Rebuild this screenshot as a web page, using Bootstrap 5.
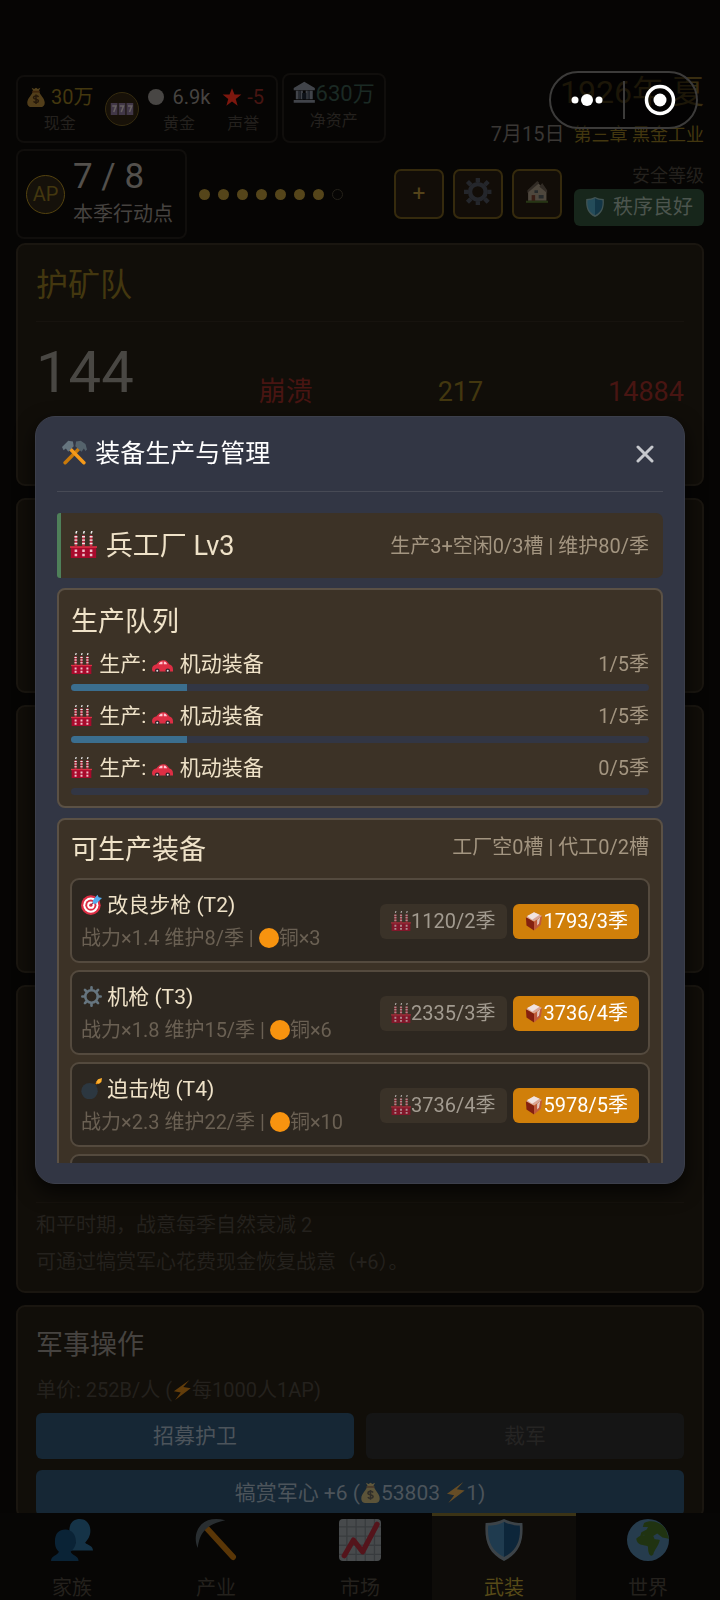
<!DOCTYPE html>
<html lang="zh-CN">
<head>
<meta charset="utf-8">
<meta name="viewport" content="width=device-width, initial-scale=1">
<title>装备生产与管理</title>
<link href="https://cdn.jsdelivr.net/npm/bootstrap@5.3.0/dist/css/bootstrap.min.css" rel="stylesheet">
<style>
body{background:#060504;color:#464340;font-family:Roboto,"Noto Sans CJK SC",sans-serif;font-size:20px;line-height:30px;height:100vh;overflow:hidden}
button{font-family:inherit}
.ico{width:1em;height:1em;flex:none;vertical-align:-3px}
.lead-ico{margin-right:2px}
.dim{opacity:.36}
.page{min-height:0;overflow:hidden;padding:73px 16px 0}
.gold{color:#43370f}.faint{color:#24211d}.danger-dim{color:#481512}.green-dim{color:#1b2a24}
.stat-box{border:2px solid #100e0c;border-radius:8px}
.stat-box small{font-size:16px;line-height:24px;color:#24211e}
.funds{height:68px;margin-top:2px}
.assets{font-size:22px;padding:4px 9px 8px}
.slot-btn{width:34px;height:34px;border:1px solid #352b0f;background:#171108;font-size:24px}
.year{font-size:32px;line-height:38px;color:#382d10}
.date{color:#3a3734}
.chapter{font-size:18px;line-height:26px}
.ap-box{min-width:171px}
.ap-ring{width:39px;height:39px;border:1px solid #54430f;background:#15110a;line-height:37px}
.ap-num{font-size:35px;line-height:44px;color:#53504c}
.dot{width:11px;height:11px;background:#55451a}
.dot-empty{background:none;border:1px solid #242119}
.tools{gap:9px}
.tool{width:50px;height:50px;border:2px solid #352a0d;border-radius:7px;background:#120d08;color:#54431a}
.safe{background:#17261b;border-radius:6px;height:37px;padding:0 11px;color:#4c554e}
.panel{background:#110e09;border:2px solid #1a1610;border-radius:9px;padding:0 18px;margin-bottom:12px;flex:none}
.panel-title{font-size:32px;line-height:44px;padding:18px 0 14px;border-bottom:1px solid #17130e}
.count{font-size:58px;line-height:60px;color:#494743}
.kpi{font-size:27px;line-height:36px}
.h-a{min-height:243px}.h-b{min-height:195px}.h-c{min-height:268px}.h-d{min-height:308px;padding-bottom:6px}
.note{line-height:37px;padding-top:4px;border-top:1px solid #16120d}
.h27{font-size:27px;line-height:36px;font-weight:400;margin:0}
.act{height:46px;border:0;border-radius:6px;background:#162735;color:#4c545b;font-size:21px}
.act-off{background:#151515;color:#252423}
.act-wide{margin-top:11px}
.tabs{height:87px;flex:none;background:#070605}
.tabs a{flex:1;color:#24211d;text-decoration:none;border-top:3px solid transparent;padding-top:3px}
.tabs a.on{background:#0e0c09;border-color:#3b3315;color:#574a18}
.tabs svg{font-size:42px}
.tabs span{margin-top:15px;line-height:24px}
.capsule{top:71px;right:22px;width:149px;height:58px;border:2px solid #3c3b3a;border-radius:29px;background:rgba(0,0,0,.5);z-index:30}
.capsule button{border:0;background:none;padding:0;line-height:0}
.capsule i{width:2px;height:38px;background:#3c3b3a}
.veil{z-index:20;padding:0 35px}
.sheet{background:#323644;border:1px solid #3c3f4b;border-radius:20px;height:48vh;padding:0 21px 20px;box-shadow:0 8px 20px rgba(0,0,0,.7)}
.sheet-head{height:75px;border-bottom:1px solid #474a55;font-size:25px;color:#fff;flex:none;padding:0 9px 0 5px}
.sheet-head h1{font-size:25px;line-height:36px;font-weight:400;margin:0}
.sheet-head button{border:0;background:none;padding:0;line-height:0}
.sheet-body{min-height:0;overflow:hidden;padding-top:21px;color:#efe2c8}
.arsenal{background:#3c3226;border-left:4px solid #4f8059;border-radius:3px 7px 7px 3px;height:65px;padding:0 14px 0 9px;flex:none}
.sub{color:#a39580}
.box{background:#3c3226;border:2px solid #5b5145;border-radius:8px;padding:0 12px 2px;margin-top:10px;flex:none}
.queue-title{padding:14px 0 8px}
.makeable{padding-top:8px;margin-bottom:10px}
.job{font-size:21px;line-height:32px}
.job .sub{font-size:20px}
.meter{height:7px;border-radius:4px;background:#323644;margin:4px 0 9px}
.meter .progress-bar{background:#3b6e8e}
.gear-row{background:#2d2720;border:2px solid #544a3e;border-radius:9px;height:85px;padding:2px 9px 0;margin:0 -1px 7px}
.gear-name{font-size:21px;line-height:32px}
.gear-info{color:#6a6053;line-height:34px}
.make{height:35px;border:0;border-radius:6px;padding:0 11px;background:#3a3228;color:#a29b90;font-size:20px;line-height:35px;white-space:nowrap}
.make .ico{opacity:.65}
.buy{background:#d07f0a;color:#fff}
.buy .ico{opacity:1}
.makes{gap:6px}
</style>
</head>
<body class="d-flex flex-column">
<svg class="d-none" aria-hidden="true">
 <symbol id="bag" viewBox="0 0 32 32"><path fill="#d9a441" d="M11 7h10c1 5 9 11 9 18 0 5-3 7-7 7H9c-4 0-7-2-7-7C2 18 10 12 11 7z"/><path fill="#e2b04a" d="M9 1l4 2 3-2 3 2 4-2-3 6h-8z"/><path fill="#a6601c" d="M10 6h12v3H10z"/><path fill="none" stroke="#5e3b16" stroke-width="2.4" d="M20 16c-2-3-8-2-8 1s8 2 8 5-6 4-8 1M16 12v15"/></symbol>
 <symbol id="slots" viewBox="0 0 32 24"><g fill="#8b7bb8"><rect x="1" y="4" width="9" height="16"/><rect x="11.500" y="4" width="9" height="16"/><rect x="22" y="4" width="9" height="16"/></g><g fill="none" stroke="#f4eefa" stroke-width="2"><path d="M3 8h5l-3 8M13 8h5l-3 8M24 8h5l-3 8"/></g></symbol>
 <symbol id="star" viewBox="0 0 32 32"><path fill="#7c170e" d="M16 2l4 10h11l-9 7 3 11-9-7-9 7 3-11-9-7h11z"/></symbol>
 <symbol id="bank" viewBox="0 0 32 32"><path fill="#a9b4c6" d="M16 1L1 10v3h30v-3zM4 14h4v12H4zM11 14h3v12h-3zM18 14h3v12h-3zM24 14h4v12h-4zM1 27h30v4H1z"/><path fill="#5d6b80" d="M8 14h3v12H8zM21 14h3v12h-3z"/><path fill="#1d2b3c" d="M13 17h6v9h-6z"/></symbol>
 <symbol id="gear" viewBox="0 0 32 32"><g stroke="#66757f" fill="none"><circle cx="16" cy="16" r="9.500" stroke-width="4"/><path stroke-width="4" stroke-linecap="round" d="M16 5V2M16 30v-3M5 16H2M30 16h-3M8 8L6 6M26 26l-2-2M8 24l-2 2M26 6l-2 2"/></g></symbol>
 <symbol id="cog" viewBox="0 0 32 32"><g stroke="#46546b" fill="none"><circle cx="16" cy="16" r="9" stroke-width="5"/><path stroke-width="5" d="M16 5V0M16 32v-5M5 16H0M32 16h-5M8 8L4 4M28 28l-4-4M8 24l-4 4M28 4l-4 4"/></g></symbol>
 <symbol id="house" viewBox="0 0 32 32"><path fill="#b9ad9c" d="M3 14L16 2l13 12v14H3z"/><path fill="#6a6258" d="M16 0l3 3-17 14v-4zM19 8l4-5 7 10v4z"/><path fill="#7c3b2c" d="M8 20h5v9H8z"/><path fill="#4b5d6b" d="M18 20h7v5h-7zM12 13h5v4h-5z"/><path fill="#4d7d2c" d="M0 28h32v3H0z"/></symbol>
 <symbol id="shield" viewBox="0 0 32 32"><path fill="#8fa6b8" d="M16 0c4 2 9 3 14 3 1 14-2 23-14 29C4 26 1 17 2 3c5 0 10-1 14-3z"/><path fill="#3d8fca" d="M16 2v27C6 24 3 16 4 5c4 0 9-1 12-3z"/><path fill="#0d5492" d="M16 2v27c10-5 13-13 12-24-4 0-9-1-12-3z"/></symbol>
 <symbol id="hammers" viewBox="0 0 32 32"><g stroke-linecap="round" stroke-width="4.500" fill="none"><path stroke="#c97a0b" d="M22 11L4 29"/><path stroke="#f59a1a" d="M10 11l18 18"/></g><path fill="#66757f" d="M0 9l8-8 6 1 1 6-7 7-3-4-3 2z"/><path fill="#55636c" d="M32 12l-2-7-6-4-6 1-1 6 8 7 3-4 2 3z"/></symbol>
 <symbol id="factory" viewBox="0 0 32 32"><path fill="#a80a2c" d="M1 19h30v13H1z"/><path fill="#dd2e44" d="M0 18h32v2H0z"/><g stroke="#c42c44" stroke-width="3"><path d="M7 5v13M16 5v13M25 5v13"/></g><g stroke="#f2e5e8" stroke-width="3.500" stroke-dasharray="1.600 2.400"><path d="M7 6v11M16 6v11M25 6v11"/></g><g stroke="#eee" stroke-width="1.800"><path d="M7 3l1-3M16 3l1-3M25 3l1-3"/></g><path stroke="#f0bfca" stroke-width="3" stroke-dasharray="3 2" d="M7 22v9M16 22v9M25 22v9"/></symbol>
 <symbol id="car" viewBox="0 0 32 32"><path fill="#dd2e44" d="M0 25c0-5 2-7 7-8 4-5 6-6 11-6 4 0 6 3 8 6 4 1 6 3 6 8v3H1z"/><path fill="#ffc8d2" d="M10 17c2-3 4-4 6-4v4zM18 13c3 0 4 2 5 4h-5z"/><circle cx="8" cy="27" r="3.500" fill="#31262a"/><circle cx="24" cy="27" r="3.500" fill="#31262a"/><circle cx="8" cy="27" r="1.500" fill="#ddd"/><circle cx="24" cy="27" r="1.500" fill="#ddd"/></symbol>
 <symbol id="target" viewBox="0 0 32 32"><circle cx="15" cy="17" r="15" fill="#dd2e44"/><circle cx="15" cy="17" r="11.500" fill="#fff"/><circle cx="15" cy="17" r="8.500" fill="#dd2e44"/><circle cx="15" cy="17" r="5.500" fill="#fff"/><circle cx="15" cy="17" r="2.500" fill="#dd2e44"/><path stroke="#9a2335" stroke-width="2" d="M15 17l8-8"/><path fill="#55acee" d="M18 10l7-9 2 4 5 1-9 9-5 0z"/></symbol>
 <symbol id="bomb" viewBox="0 0 32 32"><circle cx="13" cy="20" r="12.500" fill="#2c3740"/><path stroke="#2c3740" stroke-width="6" d="M17 15l5-5"/><path stroke="#f4900c" stroke-width="3" fill="none" d="M23 9l3-3"/><path fill="#ffb02e" d="M32 0l-1 6-4 3-4-3 3-4z"/></symbol>
 <symbol id="box" viewBox="0 0 32 32"><path fill="#d9a594" d="M3 10L16 2l13 6-13 9z"/><path fill="#f1e3df" d="M5 8l11-6 9 4-12 8z"/><path fill="#84200f" d="M3 10l13 7v14L4 23z"/><path fill="#bf5a3a" d="M16 17l13-9-2 14-11 9z"/><path fill="#e0c4bc" d="M21 14l5-4-2 10-3 3z"/></symbol>
 <symbol id="bolt" viewBox="0 0 32 32"><path fill="#f4900c" d="M28 0L3 18l11 2L5 32l25-19-12-2z"/></symbol>
 <symbol id="people" viewBox="0 0 32 32"><path fill="#2f83bd" d="M14 24c0-4 3-4 5-6-3-2-5-5-5-9 0-6 3-9 8-9s8 4 8 9c0 4-2 7-4 9 2 2 6 2 6 6z"/><path fill="#12568d" d="M0 32c0-4 5-4 6-7-2-2-3-4-3-8 0-6 3-9 8-9s8 4 8 9c0 4-2 6-4 8 1 3 6 3 6 7z"/></symbol>
 <symbol id="pick" viewBox="0 0 32 32"><path stroke="#ec8b0b" stroke-width="4.500" stroke-linecap="round" d="M8 6l21 23"/><path fill="#66757f" d="M23 1C16-1 9 0 5 4 1 8-1 15 2 22c1-6 2-10 6-14 4-4 8-5 15-7z"/></symbol>
 <symbol id="chart" viewBox="0 0 32 32"><rect width="32" height="32" rx="3" fill="#b9c2c9"/><path stroke="#8f9aa3" d="M6 0v32M13 0v32M20 0v32M27 0v32M0 6h32M0 13h32M0 20h32M0 27h32"/><path fill="none" stroke="#dd2e44" stroke-width="4" stroke-linecap="round" stroke-linejoin="round" d="M4 28l7-12 7 9L29 4"/></symbol>
 <symbol id="globe" viewBox="0 0 32 32"><circle cx="16" cy="16" r="16" fill="#5d9ccc"/><path fill="#4c8428" d="M13 3c5-3 14-1 17 6l2 6-5-1-4-3-3 2 1 2-5-1-3-2-3 1 1-3 4-2 1-2-4 0zM7 15c4-4 9-3 12-1 2 2 4 1 6 2-1 5-4 7-5 11-3 3-4-2-4-6-3-2-8 0-9-6z"/></symbol>
</svg>

<main class="page flex-fill d-flex flex-column">
 <div class="d-flex align-items-start flex-none">
  <div class="stat-box funds d-flex align-items-center text-center text-nowrap">
   <div class="d-flex flex-column ps-2 me-1"><span><svg class="ico dim"><use href="#bag"/></svg> <span class="gold">30万</span></span><small>现金</small></div>
   <button class="slot-btn rounded-circle p-0 d-flex align-items-center justify-content-center ms-2" aria-label="老虎机"><svg class="ico dim"><use href="#slots"/></svg></button>
   <div class="d-flex flex-column ms-2"><span><svg class="ico"><circle cx="9" cy="10" r="8" fill="#484644"/></svg> 6.9k</span><small>黄金</small></div>
   <div class="d-flex flex-column ms-2 ps-1 me-2 pe-1"><span class="danger-dim"><svg class="ico"><use href="#star"/></svg> -5</span><small>声誉</small></div>
  </div>
  <div class="stat-box assets d-flex flex-column text-center text-nowrap ms-1"><span><svg class="ico dim fs-4"><use href="#bank"/></svg><span class="green-dim">630万</span></span><small>净资产</small></div>
  <div class="ms-auto text-end text-nowrap">
   <div class="year">1926年 夏</div>
   <div class="date mt-2">7月15日 <span class="chapter gold ms-1">第三章 黑金工业</span></div>
  </div>
 </div>
 <div class="d-flex align-items-center mb-1">
  <div class="stat-box ap-box d-flex align-items-center text-nowrap ps-2 py-1">
   <span class="ap-ring rounded-circle text-center gold">AP</span>
   <div class="ms-2 pe-2"><div class="ap-num">7 / 8</div><div class="pb-1">本季行动点</div></div>
  </div>
  <div class="d-flex gap-2 ms-2 ps-1">
   <span class="dot rounded-circle"></span><span class="dot rounded-circle"></span><span class="dot rounded-circle"></span><span class="dot rounded-circle"></span><span class="dot rounded-circle"></span><span class="dot rounded-circle"></span><span class="dot rounded-circle"></span><span class="dot dot-empty rounded-circle"></span>
  </div>
  <div class="tools d-flex ms-auto">
   <button class="tool p-0 fs-4" aria-label="增加">+</button>
   <button class="tool p-0" aria-label="设置"><svg class="ico dim fs-2"><use href="#cog"/></svg></button>
   <button class="tool p-0" aria-label="住宅"><svg class="ico dim fs-4"><use href="#house"/></svg></button>
  </div>
  <div class="text-end ms-2 ps-1"><div class="chapter faint">安全等级</div><div class="safe d-flex align-items-center"><svg class="ico dim me-2"><use href="#shield"/></svg>秩序良好</div></div>
 </div>

 <section class="panel h-a">
  <h2 class="panel-title gold fw-normal m-0">护矿队</h2>
  <div class="d-flex justify-content-between align-items-end pt-3 mt-1">
   <span class="count pb-2">144</span><span class="kpi danger-dim">崩溃</span><span class="kpi gold">217</span><span class="kpi danger-dim">14884</span>
  </div>
 </section>
 <section class="panel h-b"></section>
 <section class="panel h-c"></section>
 <section class="panel h-d d-flex flex-column justify-content-end faint">
  <div class="note pb-1"><div>和平时期，战意每季自然衰减 2</div><div>可通过犒赏军心花费现金恢复战意（+6）。</div></div>
 </section>
 <section class="panel pt-3">
  <h2 class="h27 pt-1">军事操作</h2>
  <p class="faint mb-2 mt-2 pt-1">单价: 252B/人 (<svg class="ico dim"><use href="#bolt"/></svg>每1000人1AP)</p>
  <div class="row g-0 gap-2 flex-nowrap"><button class="act col">招募护卫</button><button class="act act-off col ms-1" disabled>裁军</button></div>
  <button class="act act-wide w-100">犒赏军心 +6 (<svg class="ico dim"><use href="#bag"/></svg>53803 <svg class="ico dim"><use href="#bolt"/></svg>1)</button>
 </section>
</main>

<nav class="tabs d-flex text-center">
 <a href="#family" class="d-flex flex-column align-items-center"><svg class="ico dim"><use href="#people"/></svg><span>家族</span></a>
 <a href="#industry" class="d-flex flex-column align-items-center"><svg class="ico dim"><use href="#pick"/></svg><span>产业</span></a>
 <a href="#market" class="d-flex flex-column align-items-center"><svg class="ico dim"><use href="#chart"/></svg><span>市场</span></a>
 <a href="#army" class="on d-flex flex-column align-items-center"><svg class="ico dim"><use href="#shield"/></svg><span>武装</span></a>
 <a href="#world" class="d-flex flex-column align-items-center"><svg class="ico dim"><use href="#globe"/></svg><span>世界</span></a>
</nav>

<div class="capsule position-fixed d-flex align-items-center justify-content-evenly">
 <button aria-label="更多"><svg width="32" height="14" fill="#fff"><circle cx="4" cy="7" r="3.500"/><circle cx="16" cy="7" r="6"/><circle cx="28" cy="7" r="3.500"/></svg></button>
 <i></i>
 <button aria-label="关闭小程序"><svg width="32" height="32"><circle cx="16" cy="16" r="13.500" fill="none" stroke="#fff" stroke-width="3.500"/><circle cx="16" cy="16" r="6.500" fill="#fff"/></svg></button>
</div>

<div class="veil position-fixed top-0 start-0 w-100 h-100 d-flex align-items-center">
 <div class="sheet w-100 d-flex flex-column" role="dialog" aria-labelledby="dlg">
  <header class="sheet-head d-flex align-items-center justify-content-between">
   <h1 id="dlg"><svg class="ico lead-ico"><use href="#hammers"/></svg> 装备生产与管理</h1>
   <button aria-label="关闭"><svg width="18" height="18" stroke="#c6c8cd" stroke-width="3" stroke-linecap="round"><path d="M2 2l14 14M16 2L2 16"/></svg></button>
  </header>
  <div class="sheet-body d-flex flex-column">
   <div class="arsenal d-flex align-items-center justify-content-between"><h2 class="h27"><svg class="ico lead-ico"><use href="#factory"/></svg> 兵工厂 Lv3</h2><span class="sub">生产3+空闲0/3槽 | 维护80/季</span></div>
   <section class="box">
    <h2 class="h27 queue-title">生产队列</h2>
    <div class="job d-flex justify-content-between"><span><svg class="ico lead-ico"><use href="#factory"/></svg> 生产: <svg class="ico lead-ico"><use href="#car"/></svg> 机动装备</span><span class="sub">1/5季</span></div>
    <div class="meter progress"><div class="progress-bar" style="width:20%"></div></div>
    <div class="job d-flex justify-content-between"><span><svg class="ico lead-ico"><use href="#factory"/></svg> 生产: <svg class="ico lead-ico"><use href="#car"/></svg> 机动装备</span><span class="sub">1/5季</span></div>
    <div class="meter progress"><div class="progress-bar" style="width:20%"></div></div>
    <div class="job d-flex justify-content-between"><span><svg class="ico lead-ico"><use href="#factory"/></svg> 生产: <svg class="ico lead-ico"><use href="#car"/></svg> 机动装备</span><span class="sub">0/5季</span></div>
    <div class="meter progress"><div class="progress-bar" style="width:0%"></div></div>
   </section>
   <section class="box">
    <div class="makeable d-flex justify-content-between"><h2 class="h27 pt-1">可生产装备</h2><span class="sub pt-1">工厂空0槽 | 代工0/2槽</span></div>
    <div class="gear-row d-flex align-items-center justify-content-between text-nowrap"><div><div class="gear-name"><svg class="ico"><use href="#target"/></svg> 改良步枪 (T2)</div><div class="gear-info">战力×1.4 维护8/季 | <svg class="ico"><circle cx="10" cy="10" r="10" fill="#f7930f"/></svg>铜×3</div></div><div class="makes d-flex"><button class="make" disabled><svg class="ico"><use href="#factory"/></svg>1120/2季</button><button class="make buy"><svg class="ico"><use href="#box"/></svg>1793/3季</button></div></div>
    <div class="gear-row d-flex align-items-center justify-content-between text-nowrap"><div><div class="gear-name"><svg class="ico"><use href="#gear"/></svg> 机枪 (T3)</div><div class="gear-info">战力×1.8 维护15/季 | <svg class="ico"><circle cx="10" cy="10" r="10" fill="#f7930f"/></svg>铜×6</div></div><div class="makes d-flex"><button class="make" disabled><svg class="ico"><use href="#factory"/></svg>2335/3季</button><button class="make buy"><svg class="ico"><use href="#box"/></svg>3736/4季</button></div></div>
    <div class="gear-row d-flex align-items-center justify-content-between text-nowrap"><div><div class="gear-name"><svg class="ico"><use href="#bomb"/></svg> 迫击炮 (T4)</div><div class="gear-info">战力×2.3 维护22/季 | <svg class="ico"><circle cx="10" cy="10" r="10" fill="#f7930f"/></svg>铜×10</div></div><div class="makes d-flex"><button class="make" disabled><svg class="ico"><use href="#factory"/></svg>3736/4季</button><button class="make buy"><svg class="ico"><use href="#box"/></svg>5978/5季</button></div></div>
    <div class="gear-row"></div>
   </section>
  </div>
 </div>
</div>
<script src="https://cdn.jsdelivr.net/npm/bootstrap@5.3.0/dist/js/bootstrap.bundle.min.js"></script>
</body>
</html>
